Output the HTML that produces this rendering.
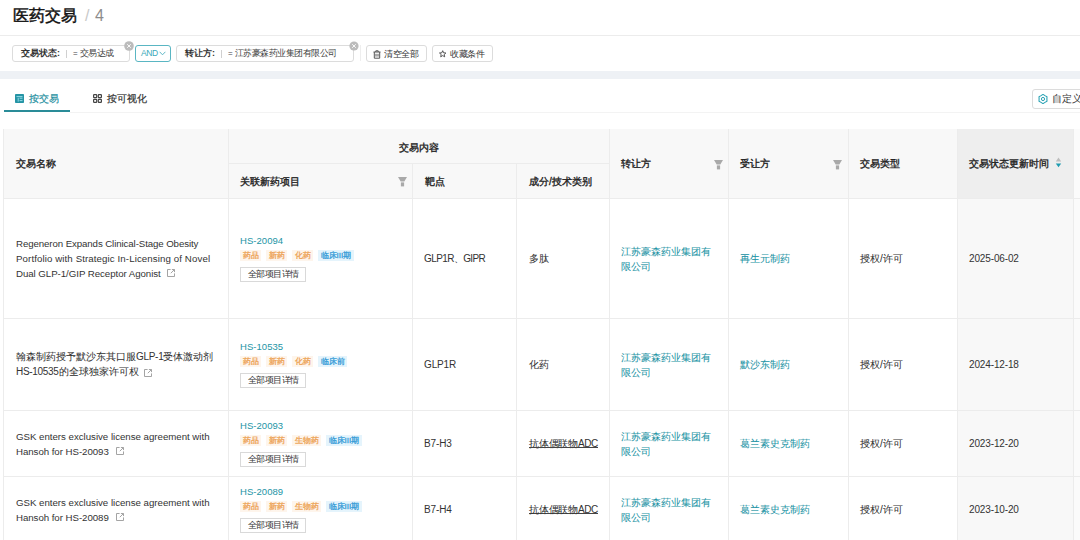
<!DOCTYPE html>
<html><head><meta charset="utf-8">
<style>
*{box-sizing:border-box;margin:0;padding:0}
html,body{width:1080px;height:540px;overflow:hidden;background:#fff}
body{position:relative;font-family:"Liberation Sans",sans-serif;color:#333;font-size:10px}
.a{position:absolute;white-space:nowrap}
.hline{position:absolute;height:1px;background:#ececec}
.vline{position:absolute;width:1px;background:#ececec}
.chip{position:absolute;height:17px;border:1px solid #dcdcdc;border-radius:3px;background:#fff;font-size:9px;line-height:15px}
.x{position:absolute;width:10px;height:10px;border-radius:50%;background:#bdbdbd}
.btn{position:absolute;height:17px;border:1px solid #dcdcdc;border-radius:3px;background:#fff;font-size:9px;line-height:15px;color:#333}
.th{position:absolute;color:#222;font-size:10px;line-height:15px;-webkit-text-stroke-width:0.35px}
.cell{position:absolute;font-size:10px;line-height:15px;color:#333;white-space:nowrap;-webkit-text-stroke-width:0.05px}
.lat{-webkit-text-stroke-width:0;font-size:10px;letter-spacing:-0.14px}
.teal{color:#2394a5}
.tag{display:inline-block;height:11px;line-height:12px;font-size:8px;padding:0 2.5px;margin-right:5px;vertical-align:top;-webkit-text-stroke-width:0.3px;overflow:hidden}
.to{background:#fef5ec;color:#eda457}
.tb{background:#e5f4fc;color:#389dd8}
.dbtn{position:absolute;height:15px;border:1px solid #d9d9d9;font-size:9px;letter-spacing:-0.45px;line-height:13px;padding:0 6px 0 6.5px;color:#333;background:#fff}
</style></head><body>

<!-- title -->
<div class="a" style="left:13px;top:3px;font-size:16px;line-height:26px;color:#111;-webkit-text-stroke-width:0.45px">医药交易</div><div class="a" style="left:85px;top:3px;font-size:16px;line-height:26px;color:#c8c8c8">/</div><div class="a" style="left:95px;top:3px;font-size:16px;line-height:26px;color:#8c8c8c">4</div>
<div class="hline" style="left:0;top:35px;width:1080px;background:#ececec"></div>

<!-- filters -->
<div class="chip" style="left:12px;top:45px;width:118px">
  <span class="a" style="left:8px;top:0;font-weight:bold;color:#333">交易状态:</span>
  <span class="a" style="left:53px;top:4px;width:1px;height:8px;background:#d0d0d0"></span>
  <span class="a" style="left:60px;top:0;color:#444;font-size:9px;letter-spacing:-0.5px"><span style="font-size:8px;margin-right:2.5px">=</span>交易达成</span>
</div>
<svg class="a" style="left:124px;top:40.5px" width="10" height="10" viewBox="0 0 10 10"><circle cx="5" cy="5" r="4.8" fill="#bcbcbc"/><path d="M3.2 3.2L6.8 6.8M6.8 3.2L3.2 6.8" stroke="#fff" stroke-width="0.9"/></svg>
<div class="btn" style="left:135px;top:45px;width:36px;border-color:#5ab6c3;color:#3aa9b9;font-size:8.5px;letter-spacing:-0.2px">
  <span class="a" style="left:5px;top:-0.5px;letter-spacing:-0.35px">AND</span>
  <svg class="a" style="left:22.5px;top:4.5px" width="7" height="5" viewBox="0 0 7 5"><path d="M0.6 0.8L3.5 3.8L6.4 0.8" fill="none" stroke="#4fb0bf" stroke-width="0.9"/></svg>
</div>
<div class="chip" style="left:176px;top:45px;width:178px">
  <span class="a" style="left:8px;top:0;font-weight:bold;color:#333">转让方:</span>
  <span class="a" style="left:44px;top:4px;width:1px;height:8px;background:#d0d0d0"></span>
  <span class="a" style="left:51px;top:0;color:#444;font-size:9px;letter-spacing:-0.5px"><span style="font-size:8px;margin-right:2.5px">=</span>江苏豪森药业集团有限公司</span>
</div>
<svg class="a" style="left:348.5px;top:41px" width="10" height="10" viewBox="0 0 10 10"><circle cx="5" cy="5" r="4.6" fill="#bcbcbc"/><path d="M3.2 3.2L6.8 6.8M6.8 3.2L3.2 6.8" stroke="#fff" stroke-width="0.9"/></svg>
<div class="vline" style="left:360px;top:45px;height:16px;background:#eee"></div>
<div class="btn" style="left:366px;top:45px;width:61px">
  <svg class="a" style="left:6px;top:4px" width="8" height="9" viewBox="0 0 8 9"><path d="M0.5 2H7.5M2.8 2V0.8H5.2V2M1.3 2V8.2H6.7V2M3 3.8V6.6M5 3.8V6.6" fill="none" stroke="#555" stroke-width="1"/></svg>
  <span class="a" style="left:17px;top:0.5px;font-size:9px;letter-spacing:-0.5px">清空全部</span>
</div>
<div class="btn" style="left:432px;top:45px;width:61px">
  <svg class="a" style="left:6px;top:3.5px" width="8" height="8" viewBox="0 0 8 8"><path d="M3.7 0.7L4.6 2.8L6.9 3L5.2 4.5L5.7 6.8L3.7 5.6L1.7 6.8L2.2 4.5L0.5 3L2.8 2.8Z" fill="none" stroke="#444" stroke-width="0.9" stroke-linejoin="round"/></svg>
  <span class="a" style="left:17px;top:0.5px;font-size:9px;letter-spacing:-0.5px">收藏条件</span>
</div>

<!-- gray band -->
<div class="a" style="left:0;top:71px;width:1080px;height:8px;background:#eef1f5"></div>

<!-- tabs -->
<svg class="a" style="left:15px;top:94px" width="9" height="9" viewBox="0 0 9 9"><rect x="0" y="0" width="9" height="9" rx="0.8" fill="#2594a5"/><path d="M1.5 2.6H7.5M3.2 3.8V7.6M4.6 4.2H7.5M4.6 6.6H7.5" stroke="#9fe3ee" stroke-width="0.9"/></svg>
<div class="a" style="left:29px;top:91px;font-size:10px;line-height:15px;color:#1f8fa0;-webkit-text-stroke-width:0.2px">按交易</div>
<svg class="a" style="left:93px;top:94px" width="9" height="9" viewBox="0 0 9 9"><rect x="0.6" y="0.6" width="3.1" height="3.1" rx="0.6" fill="none" stroke="#444" stroke-width="1.2"/><rect x="5.3" y="0.6" width="3.1" height="3.1" rx="0.6" fill="none" stroke="#444" stroke-width="1.2"/><rect x="0.6" y="5.3" width="3.1" height="3.1" rx="0.6" fill="none" stroke="#444" stroke-width="1.2"/><rect x="5.3" y="5.3" width="3.1" height="3.1" rx="0.6" fill="none" stroke="#444" stroke-width="1.2"/></svg>
<div class="a" style="left:107px;top:91px;font-size:10px;line-height:15px;color:#333;-webkit-text-stroke-width:0.2px">按可视化</div>
<div class="a" style="left:4px;top:110px;width:66px;height:2px;background:#2a8c98"></div>
<div class="hline" style="left:70px;top:112px;width:1010px;background:#f3f3f3"></div>
<div class="btn" style="left:1032px;top:89px;width:60px;height:20px;line-height:18px;font-size:10px">
  <svg class="a" style="left:4.5px;top:4px" width="10" height="10" viewBox="0 0 10 10"><path d="M5.00 0.40L6.95 1.62L8.98 2.70L8.90 5.00L8.98 7.30L6.95 8.38L5.00 9.60L3.05 8.38L1.02 7.30L1.10 5.00L1.02 2.70L3.05 1.62Z" fill="none" stroke="#2ba3b5" stroke-width="1.1" stroke-linejoin="round"/><circle cx="5" cy="5" r="1.6" fill="none" stroke="#2ba3b5" stroke-width="1"/></svg>
  <span class="a" style="left:18.5px;top:0">自定义</span>
</div>

<!-- table header -->
<div class="a" style="left:3px;top:129px;width:1071px;height:70px;background:#f8f8f8"></div><div class="a" style="left:1074px;top:129px;width:6px;height:411px;background:#fbfbfb"></div>
<div class="a" style="left:957px;top:129px;width:116px;height:70px;background:#eeeeee"></div>
<div class="a" style="left:957px;top:199px;width:116px;height:341px;background:#f8f8f8"></div>

<div class="th" style="left:16px;top:156px">交易名称</div>
<div class="th" style="left:399px;top:140px">交易内容</div>
<div class="th" style="left:240px;top:174px">关联新药项目</div>
<div class="th" style="left:425px;top:174px">靶点</div>
<div class="th" style="left:529px;top:174px">成分/技术类别</div>
<div class="th" style="left:621px;top:156px">转让方</div>
<div class="th" style="left:740px;top:156px">受让方</div>
<div class="th" style="left:860px;top:156px">交易类型</div>
<div class="th" style="left:969px;top:156px">交易状态更新时间</div>


<!-- header icons -->
<svg class="a" style="left:398px;top:177px" width="9" height="10" viewBox="0 0 9 10"><path d="M0 0H9L6.3 4.6H2.7Z" fill="#a9a9a9"/><rect x="2.9" y="5.4" width="3.2" height="4" fill="#a9a9a9"/></svg>
<svg class="a" style="left:714px;top:160px" width="9" height="10" viewBox="0 0 9 10"><path d="M0 0H9L6.3 4.6H2.7Z" fill="#a9a9a9"/><rect x="2.9" y="5.4" width="3.2" height="4" fill="#a9a9a9"/></svg>
<svg class="a" style="left:833px;top:160px" width="9" height="10" viewBox="0 0 9 10"><path d="M0 0H9L6.3 4.6H2.7Z" fill="#a9a9a9"/><rect x="2.9" y="5.4" width="3.2" height="4" fill="#a9a9a9"/></svg>
<svg class="a" style="left:1055px;top:157px" width="7" height="11" viewBox="0 0 7 11"><path d="M3.5 0.6L6.2 4.6H0.8Z" fill="#bdbdbd"/><path d="M0.8 6.5H6.2L3.5 10.3Z" fill="#1f9cb0"/></svg>
<!-- grid lines -->
<div class="vline" style="left:3px;top:129px;height:411px"></div>
<div class="vline" style="left:228px;top:129px;height:411px"></div>
<div class="vline" style="left:412px;top:163px;height:377px"></div>
<div class="vline" style="left:516px;top:163px;height:377px"></div>
<div class="vline" style="left:609px;top:129px;height:411px"></div>
<div class="vline" style="left:728px;top:129px;height:411px"></div>
<div class="vline" style="left:848px;top:129px;height:411px"></div>
<div class="vline" style="left:957px;top:129px;height:411px"></div>
<div class="vline" style="left:1073px;top:129px;height:411px"></div>
<div class="hline" style="left:229px;top:163px;width:380px"></div>
<div class="hline" style="left:3px;top:198px;width:1077px"></div>
<div class="hline" style="left:3px;top:318px;width:1077px"></div>
<div class="hline" style="left:3px;top:410px;width:1077px"></div>
<div class="hline" style="left:3px;top:476px;width:1077px"></div>

<!-- row 1 -->
<div class="cell" style="left:16px;top:236px"><span class="lat" style="font-size:9.7px;letter-spacing:-0.1px">Regeneron Expands Clinical-Stage Obesity</span><br><span class="lat" style="font-size:9.7px;letter-spacing:0.1px">Portfolio with Strategic In-Licensing of Novel</span><br><span class="lat" style="font-size:9.7px;letter-spacing:-0.05px">Dual GLP-1/GIP Receptor Agonist</span><svg style="margin-left:6px;vertical-align:0.5px" width="8" height="8" viewBox="0 0 8 8"><path d="M3.6 0.5H0.5V7.5H7.5V4.4M3.8 4.2L7.3 0.7M4.9 0.5H7.5V3.1" fill="none" stroke="#9a9a9a" stroke-width="0.9"/></svg></div>
<div class="cell teal" style="left:240px;top:233px"><span class="lat" style="font-size:9.5px;letter-spacing:0.05px">HS-20094</span></div>
<div class="a" style="left:240px;top:250px"><span class="tag to">药品</span><span class="tag to">新药</span><span class="tag to">化药</span><span class="tag tb">临床III期</span></div>
<div class="dbtn" style="left:240px;top:267px">全部项目详情</div>
<div class="cell" style="left:424px;top:251px"><span class="lat" style="letter-spacing:-0.6px">GLP1R、GIPR</span></div>
<div class="cell" style="left:529px;top:251px">多肽</div>
<div class="cell teal" style="left:621px;top:244px">江苏豪森药业集团有<br>限公司</div>
<div class="cell teal" style="left:740px;top:251px">再生元制药</div>
<div class="cell" style="left:860px;top:251px">授权/许可</div>
<div class="cell" style="left:969px;top:251px"><span class="lat">2025-06-02</span></div>

<!-- row 2 -->
<div class="cell" style="left:16px;top:349px">翰森制药授予默沙东其口服<span class="lat" style="letter-spacing:-0.3px">GLP-1</span>受体激动剂<br><span class="lat" style="letter-spacing:-0.3px">HS-10535</span>的全球独家许可权<svg style="margin-left:5.5px;vertical-align:-1.5px" width="8" height="8" viewBox="0 0 8 8"><path d="M3.6 0.5H0.5V7.5H7.5V4.4M3.8 4.2L7.3 0.7M4.9 0.5H7.5V3.1" fill="none" stroke="#9a9a9a" stroke-width="0.9"/></svg></div>
<div class="cell teal" style="left:240px;top:339px"><span class="lat" style="font-size:9.5px;letter-spacing:0.05px">HS-10535</span></div>
<div class="a" style="left:240px;top:356px"><span class="tag to">药品</span><span class="tag to">新药</span><span class="tag to">化药</span><span class="tag tb">临床前</span></div>
<div class="dbtn" style="left:240px;top:373px">全部项目详情</div>
<div class="cell" style="left:424px;top:357px"><span class="lat">GLP1R</span></div>
<div class="cell" style="left:529px;top:357px">化药</div>
<div class="cell teal" style="left:621px;top:350px">江苏豪森药业集团有<br>限公司</div>
<div class="cell teal" style="left:740px;top:357px">默沙东制药</div>
<div class="cell" style="left:860px;top:357px">授权/许可</div>
<div class="cell" style="left:969px;top:357px"><span class="lat">2024-12-18</span></div>

<!-- row 3 -->
<div class="cell" style="left:16px;top:429px"><span class="lat" style="font-size:9.7px;letter-spacing:-0.02px">GSK enters exclusive license agreement with</span><br><span class="lat" style="font-size:9.7px;letter-spacing:-0.05px">Hansoh for HS-20093</span><svg style="margin-left:7px;vertical-align:0.5px" width="8" height="8" viewBox="0 0 8 8"><path d="M3.6 0.5H0.5V7.5H7.5V4.4M3.8 4.2L7.3 0.7M4.9 0.5H7.5V3.1" fill="none" stroke="#9a9a9a" stroke-width="0.9"/></svg></div>
<div class="cell teal" style="left:240px;top:418px"><span class="lat" style="font-size:9.5px;letter-spacing:0.05px">HS-20093</span></div>
<div class="a" style="left:240px;top:435px"><span class="tag to">药品</span><span class="tag to">新药</span><span class="tag to">生物药</span><span class="tag tb">临床III期</span></div>
<div class="dbtn" style="left:240px;top:452px">全部项目详情</div>
<div class="cell" style="left:424px;top:436px"><span class="lat">B7-H3</span></div>
<div class="cell" style="left:529px;top:436px;letter-spacing:-0.2px">抗体偶联物<span class="lat" style="letter-spacing:-0.5px">ADC</span></div>
<div class="cell teal" style="left:621px;top:429px">江苏豪森药业集团有<br>限公司</div>
<div class="cell teal" style="left:740px;top:436px">葛兰素史克制药</div>
<div class="cell" style="left:860px;top:436px">授权/许可</div>
<div class="cell" style="left:969px;top:436px"><span class="lat">2023-12-20</span></div>

<div class="a" style="left:529px;top:447px;width:69px;height:1px;background:#444"></div>
<div class="a" style="left:529px;top:513px;width:69px;height:1px;background:#444"></div>
<!-- row 4 -->
<div class="cell" style="left:16px;top:495px"><span class="lat" style="font-size:9.7px;letter-spacing:-0.02px">GSK enters exclusive license agreement with</span><br><span class="lat" style="font-size:9.7px;letter-spacing:-0.05px">Hansoh for HS-20089</span><svg style="margin-left:7px;vertical-align:0.5px" width="8" height="8" viewBox="0 0 8 8"><path d="M3.6 0.5H0.5V7.5H7.5V4.4M3.8 4.2L7.3 0.7M4.9 0.5H7.5V3.1" fill="none" stroke="#9a9a9a" stroke-width="0.9"/></svg></div>
<div class="cell teal" style="left:240px;top:484px"><span class="lat" style="font-size:9.5px;letter-spacing:0.05px">HS-20089</span></div>
<div class="a" style="left:240px;top:501px"><span class="tag to">药品</span><span class="tag to">新药</span><span class="tag to">生物药</span><span class="tag tb">临床III期</span></div>
<div class="dbtn" style="left:240px;top:518px">全部项目详情</div>
<div class="cell" style="left:424px;top:502px"><span class="lat">B7-H4</span></div>
<div class="cell" style="left:529px;top:502px;letter-spacing:-0.2px">抗体偶联物<span class="lat" style="letter-spacing:-0.5px">ADC</span></div>
<div class="cell teal" style="left:621px;top:495px">江苏豪森药业集团有<br>限公司</div>
<div class="cell teal" style="left:740px;top:502px">葛兰素史克制药</div>
<div class="cell" style="left:860px;top:502px">授权/许可</div>
<div class="cell" style="left:969px;top:502px"><span class="lat">2023-10-20</span></div>

</body></html>
